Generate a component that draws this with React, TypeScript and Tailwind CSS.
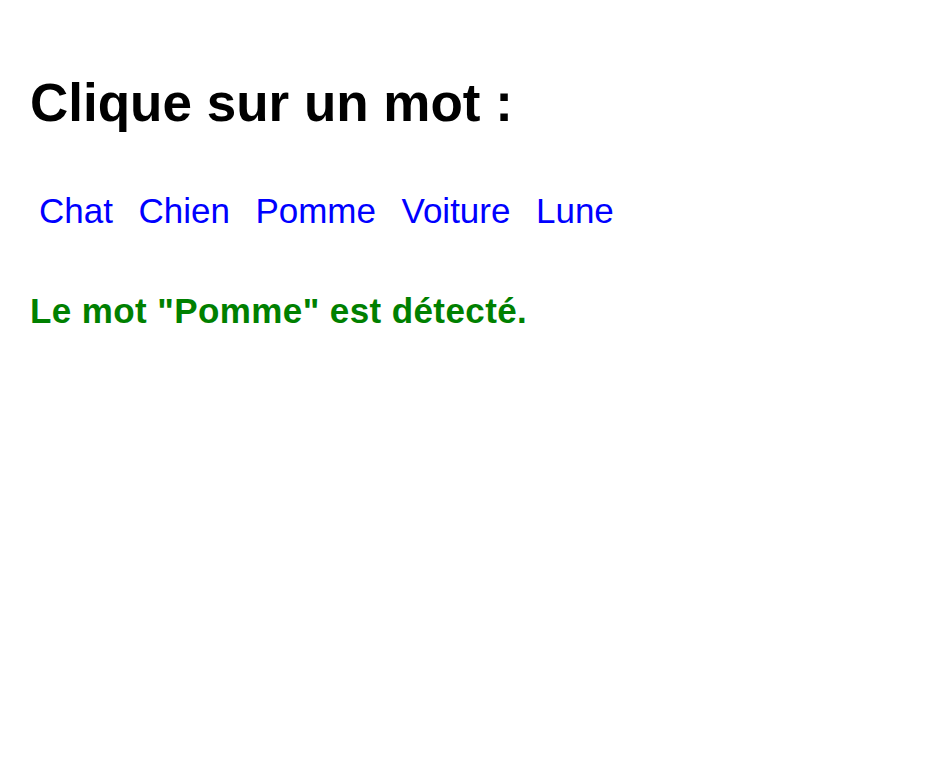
import { useState } from "react";

const WORDS = ["Chat", "Chien", "Pomme", "Voiture", "Lune"];

export default function App() {
  const [picked, setPicked] = useState("Pomme");

  return (
    <div className="min-h-screen bg-white px-[30px] pt-[72px] font-['Liberation_Sans',Arial,sans-serif]">
      <h2 className="text-[53px] leading-[62px] font-bold text-black">Clique sur un mot :</h2>

      <div className="mt-[57px] flex gap-[25.5px] pl-[9px] text-[35px] leading-[40px]">
        {WORDS.map((w) => (
          <span
            key={w}
            className="cursor-pointer text-[#0000ff]"
            onClick={() => setPicked(w)}
          >
            {w}
          </span>
        ))}
      </div>

      <p className="mt-[60px] text-[35px] leading-[40px] font-bold tracking-[0.4px] text-[#008000]">
        Le mot "{picked}" est détecté.
      </p>
    </div>
  );
}
